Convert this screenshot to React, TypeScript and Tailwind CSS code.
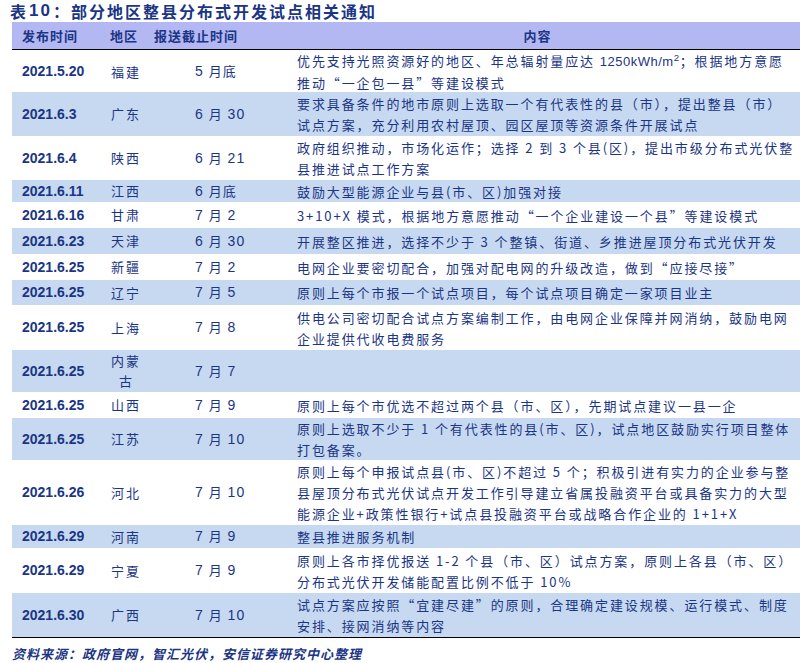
const rows: [string, string, string, string, number][] = [
  ["2021.5.20", "福建", "5 月底", "", 42],
  ["2021.6.3", "广东", "6 月 30", "要求具备条件的地市原则上选取一个有代表性的县（市），提出整县（市）试点方案，充分利用农村屋顶、园区屋顶等资源条件开展试点", 44],
  ["2021.6.4", "陕西", "6 月 21", "政府组织推动，市场化运作；选择 2 到 3 个县(区)，提出市级分布式光伏整县推进试点工作方案", 44],
  ["2021.6.11", "江西", "6 月底", "鼓励大型能源企业与县(市、区)加强对接", 22],
  ["2021.6.16", "甘肃", "7 月 2", "3+10+X 模式，根据地方意愿推动“一个企业建设一个县”等建设模式", 26],
  ["2021.6.23", "天津", "6 月 30", "开展整区推进，选择不少于 3 个整镇、街道、乡推进屋顶分布式光伏开发", 26],
  ["2021.6.25", "新疆", "7 月 2", "电网企业要密切配合，加强对配电网的升级改造，做到“应接尽接”", 26],
  ["2021.6.25", "辽宁", "7 月 5", "原则上每个市报一个试点项目，每个试点项目确定一家项目业主", 25],
  ["2021.6.25", "上海", "7 月 8", "供电公司密切配合试点方案编制工作，由电网企业保障并网消纳，鼓励电网企业提供代收电费服务", 45],
  ["2021.6.25", "内蒙古", "7 月 7", "", 42],
  ["2021.6.25", "山西", "7 月 9", "原则上每个市优选不超过两个县（市、区），先期试点建议一县一企", 26],
  ["2021.6.25", "江苏", "7 月 10", "原则上选取不少于 1 个有代表性的县(市、区)，试点地区鼓励实行项目整体打包备案。", 42],
  ["2021.6.26", "河北", "7 月 10", "原则上每个申报试点县(市、区)不超过 5 个；积极引进有实力的企业参与整县屋顶分布式光伏试点开发工作引导建立省属投融资平台或具备实力的大型能源企业+政策性银行+试点县投融资平台或战略合作企业的 1+1+X", 65],
  ["2021.6.29", "河南", "7 月 9", "整县推进服务机制", 23],
  ["2021.6.29", "宁夏", "7 月 9", "原则上各市择优报送 1-2 个县（市、区）试点方案，原则上各县（市、区）分布式光伏开发储能配置比例不低于 10%", 45],
  ["2021.6.30", "广西", "7 月 10", "试点方案应按照“宜建尽建”的原则，合理确定建设规模、运行模式、制度安排、接网消纳等内容", 44],
];

const cjk = { fontFamily: '"Noto Sans CJK SC", serif' };
const lat = { fontFamily: '"Liberation Sans", Arial, sans-serif' };

function Deadline({ s }: { s: string }) {
  const parts = s.split(" ");
  return (
    <div className="pl-[45px] text-[14px] tracking-[1px] whitespace-nowrap" style={lat}>
      {parts[0]} <span style={cjk} className="text-[13px]">{parts[1]}</span>{parts[2] ? " " + parts[2] : ""}
    </div>
  );
}

export default function App() {
  return (
    <div className="w-[805px] h-[663px] bg-white text-[#1b3585] relative overflow-hidden" style={cjk}>
      <div className="h-[22px] pl-[10px] flex items-center text-[16px] font-bold tracking-[2px] text-[#1b3585]">
        表<span style={lat} className="text-[17px] mx-[1px]">10</span>：部分地区整县分布式开发试点相关通知
      </div>
      <div className="ml-[12px] w-[788px] border-b border-black">
        <div className="h-[28px] bg-[#b4b8f2] border-b border-black grid grid-cols-[88px_50px_125px_1fr] items-center text-[13px] font-bold tracking-[1px]">
          <div className="pl-[10px]">发布时间</div>
          <div className="pl-[10px]">地区</div>
          <div className="pl-[4px]">报送截止时间</div>
          <div className="text-center">内容</div>
        </div>
        {rows.map((r, i) => (
          <div key={i} className={`grid grid-cols-[88px_50px_125px_1fr] items-center overflow-hidden ${i % 2 ? "bg-[#c6d9f0]" : "bg-white"}`} style={{ height: r[4] }}>
            <div style={lat} className="pl-[10px] text-[14px] font-bold">{r[0]}</div>
            <div className="pl-[11px] text-[13px] tracking-[2px] leading-[20px]">{r[1] === "内蒙古" ? <div>内蒙<br /><span className="pl-[8px]">古</span></div> : r[1]}</div>
            <Deadline s={r[2]} />
            <div className="pl-[22px] pr-[4px] text-[13px] tracking-[1.9px] leading-[21px]">
              {i === 0 ? (
                <>优先支持光照资源好的地区、年总辐射量应达 <span style={lat} className="tracking-[0.5px]">1250kWh/m<sup>2</sup></span>；根据地方意愿推动“一企包一县”等建设模式</>
              ) : r[3]}
            </div>
          </div>
        ))}
      </div>
      <div className="ml-[12px] mt-[6px] text-[13px] italic font-bold tracking-[1px]">资料来源：政府官网，智汇光伏，安信证券研究中心整理</div>
    </div>
  );
}
